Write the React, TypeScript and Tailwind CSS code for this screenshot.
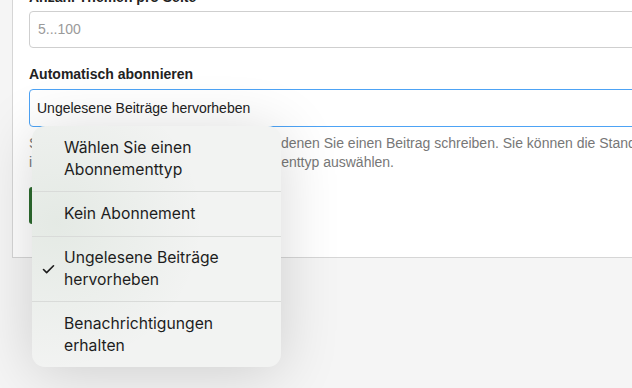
import { Check } from "lucide-react";

const options = [
  { lines: ["Wählen Sie einen", "Abonnementtyp"], h: "h-[65px]", checked: false },
  { lines: ["Kein Abonnement"], h: "h-[45px]", checked: false },
  { lines: ["Ungelesene Beiträge", "hervorheben"], h: "h-[65px]", checked: true },
  { lines: ["Benachrichtigungen", "erhalten"], h: "h-[66px]", checked: false },
];

const SubscribeMenu = () => {
  return (
    <div className="absolute left-[32px] top-[126px] w-[249px] overflow-hidden rounded-[13px] bg-[#f2f3f2] shadow-[0_6px_60px_rgba(0,0,0,0.16)] font-['Inter',sans-serif] text-[15.7px] leading-[22px] text-[#1d1d1d]">
      <div className="absolute inset-0 bg-[radial-gradient(circle_at_10%_40%,rgba(46,110,48,0.07),transparent_55%)]" />
      {options.map((opt, i) => (
        <div
          key={opt.lines[0]}
          className={`relative flex items-center ${opt.h} ${i > 0 ? "border-t border-[#d9dbd9]" : ""}`}
        >
          <div className="flex w-[32px] justify-end pr-[8px]">
            {opt.checked && <Check size={15} strokeWidth={2.6} className="text-[#1d1d1d]" />}
          </div>
          <div className="flex flex-col">
            {opt.lines.map((line) => (
              <span key={line} className="whitespace-nowrap">
                {line}
              </span>
            ))}
          </div>
        </div>
      ))}
    </div>
  );
};

export default function App() {
  return (
    <div className="relative h-[388px] w-[632px] overflow-hidden bg-[#f5f5f5] font-['Liberation_Sans',Arial,sans-serif]">
      <div className="-mt-[30px] ml-[12px] w-[700px] border border-[#d6d6d6] bg-white pl-[16px] pr-[40px] pt-[17px] pb-[33px]">
        <p className="text-[14px] font-bold leading-[18px] text-[#222]">Anzahl Themen pro Seite</p>
        <div className="mt-[5px] flex h-[37px] items-center rounded-[4px] border border-[#cfcfcf] px-[8px] text-[14px] text-[#9a9a9a]">
          5...100
        </div>

        <p className="mt-[17px] text-[14px] font-bold leading-[18px] text-[#222]">Automatisch abonnieren</p>
        <div className="mt-[6px] flex h-[38px] items-center rounded-[4px] border-[1.5px] border-[#4da3f5] px-[7px] text-[14px] text-[#222]">
          Ungelesene Beiträge hervorheben
        </div>

        <div className="mt-[7px] text-[14px] leading-[19px] text-[#777]">
          <p className="whitespace-nowrap">
            Standard-Abonnements von Themen, in denen Sie einen Beitrag schreiben. Sie können die Standardeinstellung
          </p>
          <p className="whitespace-nowrap">im Benutzerprofil jeweils einen Abonnementtyp auswählen.</p>
        </div>

        <button className="mt-[15px] h-[37px] w-[130px] rounded-[3px] bg-[#2d6b2f] text-[14px] font-bold text-white">
          Speichern
        </button>
      </div>

      <SubscribeMenu />
    </div>
  );
}
